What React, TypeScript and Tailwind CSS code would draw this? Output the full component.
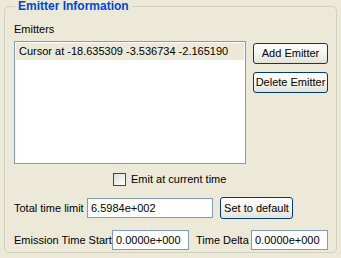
import React from 'react';

const field =
  'h-[20px] border border-[#7f9db9] bg-white px-[3px] text-[11px] leading-[18px] text-black outline-none';

const xpButton =
  'rounded-[3px] border border-[#003c74] bg-gradient-to-b from-white via-[#f4f3ee] to-[#e3e2da] text-[11px] leading-none text-black';

export default function App() {
  return (
    <div className="w-[341px] h-[258px] bg-[#ece9d8] pl-[4px] font-['Liberation_Sans',Arial,sans-serif] text-[11px] text-black">
      <fieldset className="w-[333px] h-[253px] rounded-[5px] border border-[#d0d0bf] pl-[9px] pr-[8px]">
        <legend className="ml-[1px] px-[3px] text-[12px] leading-[13px] font-bold text-[#0046d5]">
          Emitter Information
        </legend>

        {/* Emitters list */}
        <div className="pt-[10px] leading-[13px]">Emitters</div>
        <div className="mt-[5px] flex">
          <div className="w-[232px] h-[123px] border border-[#7f9db9] bg-white p-[1px]">
            <div className="h-[17px] bg-[#ece9d8] px-[3px] leading-[17px]">
              Cursor at -18.635309 -3.536734 -2.165190
            </div>
          </div>
          <div className="ml-[7px] mt-[2px] flex flex-col gap-[8px]">
            <button className={`${xpButton} w-[75px] h-[21px]`}>Add Emitter</button>
            <button className={`${xpButton} w-[75px] h-[21px]`}>Delete Emitter</button>
          </div>
        </div>

        {/* Emit checkbox */}
        <div className="mt-[9px] ml-[99px] flex h-[13px] items-center gap-[5px]">
          <span className="w-[13px] h-[13px] border border-[#1c5180] bg-gradient-to-br from-[#dcdcd7] to-white" />
          <span className="leading-[13px]">Emit at current time</span>
        </div>

        {/* Total time */}
        <div className="mt-[11px] flex items-center">
          <span className="w-[73px]">Total time limit</span>
          <input readOnly value="6.5984e+002" className={`${field} w-[126px]`} />
          <button className={`${xpButton} ml-[7px] w-[73px] h-[22px]`}>Set to default</button>
        </div>

        {/* Emission time */}
        <div className="mt-[11px] flex items-center">
          <span className="w-[98px]">Emission Time Start</span>
          <input readOnly value="0.0000e+000" className={`${field} w-[77px] h-[18px] leading-[16px]`} />
          <span className="ml-[7px] w-[55px]">Time Delta</span>
          <input readOnly value="0.0000e+000" className={`${field} w-[77px] h-[18px] leading-[16px]`} />
        </div>
      </fieldset>
    </div>
  );
}
